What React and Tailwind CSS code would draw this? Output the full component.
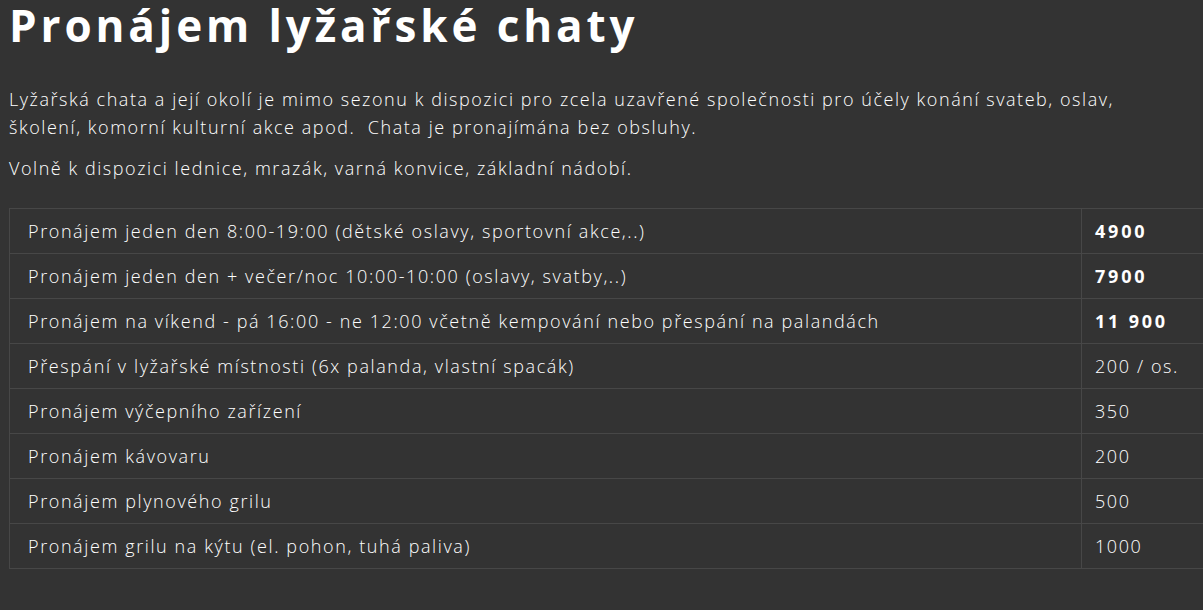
export default function App() {
  const rows = [
    ["Pronájem jeden den 8:00-19:00 (dětské oslavy, sportovní akce,..)", "4900", true],
    ["Pronájem jeden den + večer/noc 10:00-10:00 (oslavy, svatby,..)", "7900", true],
    ["Pronájem na víkend - pá 16:00 - ne 12:00 včetně kempování nebo přespání na palandách", "11 900", true],
    ["Přespání v lyžařské místnosti (6x palanda, vlastní spacák)", "200 / os.", false],
    ["Pronájem výčepního zařízení", "350", false],
    ["Pronájem kávovaru", "200", false],
    ["Pronájem plynového grilu", "500", false],
    ["Pronájem grilu na kýtu (el. pohon, tuhá paliva)", "1000", false],
  ];
  return (
    <div className="w-[1203px] h-[610px] overflow-hidden bg-[#333333] text-white" style={{ fontFamily: '"Open Sans", sans-serif' }}>
      <div className="pl-[9px]">
        <h1 className="text-[44px] leading-[50px] font-bold tracking-[3.9px] whitespace-nowrap">Pronájem lyžařské chaty</h1>
        <p className="mt-[35px] text-[18px] leading-[28px] tracking-[1.55px] font-light whitespace-nowrap">
          Lyžařská chata a její okolí je mimo sezonu k dispozici pro zcela uzavřené společnosti pro účely konání svateb, oslav,<br />
          školení, komorní kulturní akce apod.&nbsp; Chata je pronajímána bez obsluhy.
        </p>
        <p className="mt-[13px] text-[18px] leading-[28px] tracking-[1.55px] font-light">Volně k dispozici lednice, mrazák, varná konvice, základní nádobí.</p>
        <table className="mt-[26px] w-[1220px] border-collapse text-[18px] leading-[24px] tracking-[1.6px] font-light">
          <tbody>
            {rows.map((r, i) => (
              <tr key={i} className="h-[45px]">
                <td className="border border-[#474747] pl-[18px] py-0 whitespace-nowrap">{r[0]}</td>
                <td className={`border border-[#474747] pl-[13px] w-[147px] whitespace-nowrap ${r[2] ? "font-bold tracking-[2.8px]" : ""}`}>{r[1]}</td>
              </tr>
            ))}
          </tbody>
        </table>
      </div>
    </div>
  );
}
